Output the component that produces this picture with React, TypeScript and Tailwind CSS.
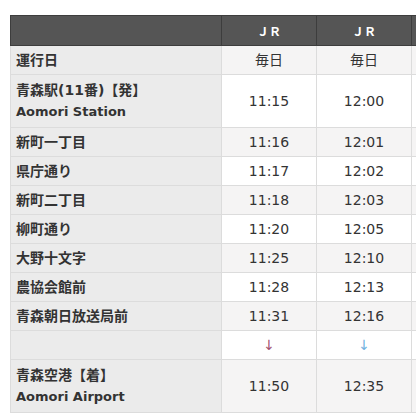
const rows: { name: string[]; times: string[]; shade: boolean }[] = [
  { name: ['運行日'], times: ['毎日', '毎日'], shade: true },
  { name: ['青森駅(11番)【発】', 'Aomori Station'], times: ['11:15', '12:00'], shade: false },
  { name: ['新町一丁目'], times: ['11:16', '12:01'], shade: true },
  { name: ['県庁通り'], times: ['11:17', '12:02'], shade: false },
  { name: ['新町二丁目'], times: ['11:18', '12:03'], shade: true },
  { name: ['柳町通り'], times: ['11:20', '12:05'], shade: false },
  { name: ['大野十文字'], times: ['11:25', '12:10'], shade: true },
  { name: ['農協会館前'], times: ['11:28', '12:13'], shade: false },
  { name: ['青森朝日放送局前'], times: ['11:31', '12:16'], shade: true },
  { name: [''], times: ['↓', '↓'], shade: false },
  { name: ['青森空港【着】', 'Aomori Airport'], times: ['11:50', '12:35'], shade: true },
];

const arrowColors = ['text-[#a3506f]', 'text-[#6fb0de]'];

export default function App() {
  return (
    <div className="w-[416px] h-[419px] overflow-hidden bg-white font-['DejaVu_Sans','Noto_Sans_CJK_JP',sans-serif] text-[14px] text-[#333]">
      <table className="mt-[15px] ml-[10px] table-fixed border-collapse w-[497px]">
        <colgroup>
          <col className="w-[211px]" />
          <col className="w-[95px]" />
          <col className="w-[95px]" />
          <col className="w-[96px]" />
        </colgroup>
        <thead>
          <tr className="bg-[#555555]">
            <th className="border border-[#3d3d3d] h-[30px]"></th>
            {[0, 1].map((i) => (
              <th
                key={i}
                className="border border-[#3d3d3d] text-center text-white text-[12px] font-bold font-['Noto_Sans_CJK_JP',sans-serif]"
              >
                ＪＲ
              </th>
            ))}
            {/* next column is cut off by the window */}
            <th className="border border-[#3d3d3d]"></th>
          </tr>
        </thead>
        <tbody>
          {rows.map((r, ri) => {
            const two = r.name.length > 1;
            const isArrow = r.times[0] === '↓';
            return (
              <tr key={ri}>
                <td
                  className={`border border-[#dcdcdc] bg-[#ebebeb] px-[5px] font-bold text-[#333] leading-[22px] ${
                    two ? 'py-[4px]' : 'py-[3px]'
                  }`}
                >
                  {r.name.map((n, ni) => (
                    <div key={ni} className={`whitespace-nowrap ${ni === 1 ? 'text-[13px]' : ''}`}>
                      {n || '\u00a0'}
                    </div>
                  ))}
                </td>
                {r.times.map((t, ti) => (
                  <td
                    key={ti}
                    className={`border border-[#dcdcdc] text-center leading-[22px] ${
                      r.shade ? 'bg-[#f5f4f4]' : 'bg-white'
                    } ${isArrow ? arrowColors[ti] : ''}`}
                  >
                    {t}
                  </td>
                ))}
                <td className={`border border-[#dcdcdc] ${r.shade ? 'bg-[#f5f4f4]' : 'bg-white'}`}></td>
              </tr>
            );
          })}
        </tbody>
      </table>
    </div>
  );
}
